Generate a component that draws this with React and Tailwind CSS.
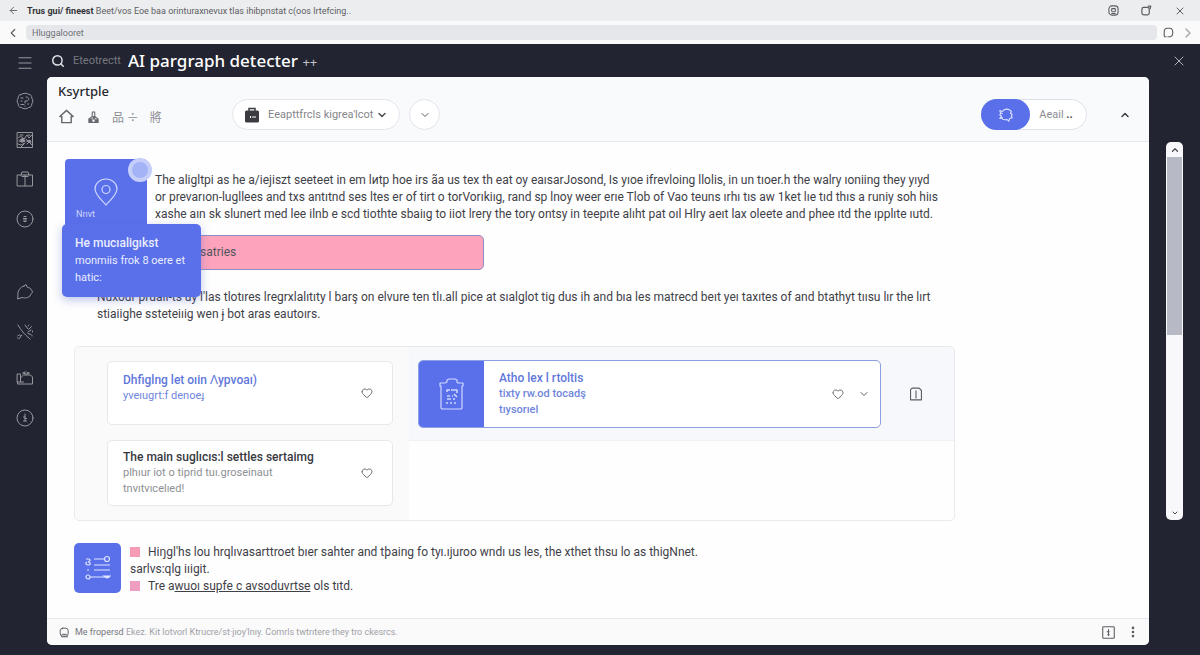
import React, { useState } from 'react'
import {
  ArrowLeft,
  ChevronDown,
  ChevronLeft,
  ChevronRight,
  ChevronUp,
  Heart,
  Menu,
  MoreVertical,
  Search,
  X
} from 'lucide-react'

const Icon = ({ size = 18, children, className = '', width = 1.2 }) => (
  <svg
    width={size}
    height={size}
    viewBox="0 0 18 18"
    fill="none"
    stroke="currentColor"
    strokeWidth={width}
    strokeLinecap="round"
    strokeLinejoin="round"
    className={`shrink-0 ${className}`}
    aria-hidden="true"
  >
    {children}
  </svg>
)

const sidebarItems = [
  {
    label: 'Assistant',
    className: 'mt-5',
    icon: (
      <>
        <path d="M5 2.5C6.500 .8 11.500.8 13 2.500 15 2.500 16 4 15.700 6c1.500 1.500 1.500 4.500 0 6 .3 2-1 3.500-3 3.500-2 1.700-5.400 1.700-7.400 0-2 0-3.300-1.500-3-3.500-1.500-1.500-1.500-4.500 0-6C2 4 3 2.500 5 2.500Z" />
        <path d="M5 6h2M10 5c3-.5 4 3 1 4L9 9v2M5 9h1M5 12.500h3M11.500 12h1M9 14v.2" />
      </>
    )
  },
  {
    label: 'Gallery',
    className: 'mt-[21px]',
    icon: (
      <>
        <rect x="1.500" y="1.500" width="15" height="15" />
        <path d="M2 7c2-2 4-2 6 1l3-4 2 3 3-3M3 10l4 1M10 8l2 2M2 13l3 1 4-2M11 13l2-2 3 3M4 4h3M12 4h2M7 9l2 1M5 16l3-3" />
        <path d="M4 9l3-2 2 3-3 1ZM11 10l3-1 1 2Z" fill="currentColor" />
      </>
    )
  },
  {
    label: 'Packages',
    className: 'mt-[21px]',
    icon: <path d="M1.500 5h15v11h-15ZM5 5l1-3h6l1 3M9 5v11M6 6.500h6" />
  },
  {
    label: 'History',
    className: 'mt-[22px]',
    icon: (
      <>
        <circle cx="9" cy="9" r="8" />
        <path d="M8 6.500h2M7.500 8.500h3M7.500 10h3M8 11.500h2" />
      </>
    )
  },
  {
    label: 'Shapes',
    className: 'mt-[55px]',
    icon: (
      <path d="M8 3 10 1.500l1.500 3c3 0 4.500 2.500 5 5-1.500 1-2 2-2.500 3.500-3 2.500-6 2-8 1.500L1.500 16l.500-3C1 8.500 4 4 8 3Z" />
    )
  },
  {
    label: 'Magic tools',
    className: 'mt-[22px]',
    icon: (
      <path d="M2 2c3 5 6 9 12 14M9 2l3 4M13 2l-1 1M15.500 3.500 13 6M12 9l3-2M16.500 8v1M12 10.500l3 1M16 12.500v.5M1.500 13c1-2 4-1 3 1-1 2-3 2-3 1M6 12l-1 1" />
    )
  },
  {
    label: 'Toolbox',
    className: 'mt-[28px]',
    icon: (
      <path d="M1.500 5h3v8h-3ZM1.500 13v2h15V8l-2-2h-7l-3 3M4.500 13h3M7 5V3.500h1.500V5h3V3.500H13V5M9 3h1" />
    )
  },
  {
    label: 'Updates',
    className: 'mt-[22px]',
    icon: (
      <>
        <circle cx="9" cy="9" r="8" />
        <path d="M9 5v7M7.500 8H9M7.500 12h3M9 9.500h1.500" />
      </>
    )
  }
]

const Lines = ({ lines, className = '' }) => (
  <p className={className}>
    {lines.map((line) => (
      <span key={line} className="block whitespace-nowrap">
        {line}
      </span>
    ))}
  </p>
)

const LikeButton = () => {
  const [liked, setLiked] = useState(false)
  return (
    <button type="button" aria-label="Like" aria-pressed={liked} onClick={() => setLiked(!liked)}>
      <Heart className="h-3 w-3 text-[#6d6e75]" fill={liked ? 'currentColor' : 'none'} />
    </button>
  )
}

const BrowserBars = () => (
  <div className="text-[#5d5e63]">
    <div className="flex h-[21px] items-center bg-[#ecedef] pr-[14px] pl-2">
      <button type="button" aria-label="Back">
        <ArrowLeft className="h-[11px] w-[11px]" />
      </button>
      <span className="ml-2 flex-1 pt-[3px] text-[9px] whitespace-nowrap">
        <b className="font-bold text-[#333438]">Trus gui/ fineest</b> Beet/vos Eoe baa orinturaxnevux tlas
        ihibpnstat c(oos lrtefcing..
      </span>
      <div className="flex items-center gap-[22px]">
        <button type="button" aria-label="Capture">
          <Icon size={11} width={1.8}>
            <rect x="1.500" y="1.500" width="15" height="15" rx="5" />
            <rect x="6" y="6" width="6" height="5" rx="1" />
            <path d="M6 14h6" />
          </Icon>
        </button>
        <button type="button" aria-label="Restore">
          <Icon size={11} width={2}>
            <rect x="1.500" y="4" width="12" height="12" rx="3" />
            <path d="M12 2h4l-1 4" />
          </Icon>
        </button>
        <button type="button" aria-label="Close window">
          <X className="h-3 w-3" />
        </button>
      </div>
    </div>
    <div className="flex h-[23px] items-center gap-[6px] bg-[#fafafb] pr-1 pl-[6px]">
      <button type="button" aria-label="Previous page">
        <ChevronLeft className="h-[14px] w-[14px]" />
      </button>
      <input
        aria-label="Address"
        defaultValue="Hluggalooret"
        className="h-[15px] min-w-0 flex-1 rounded bg-[#e6e7ea] px-[6px] text-[9px] text-[#717278] outline-none"
      />
      <button type="button" aria-label="Reload">
        <Icon size={11} width={1.8}>
          <path d="M5 16H3c-2-2-1-5-1-8 0-4 2-6 5-6h4c4 0 5 3 5 7s-1 7-5 7H8" />
        </Icon>
      </button>
      <button type="button" aria-label="Next page" className="text-[#a5a6ab]">
        <ChevronRight className="h-4 w-4" />
      </button>
    </div>
  </div>
)

const PanelHeader = () => (
  <header className="flex h-[65px] items-center border-b border-[#e6e8ef] bg-[#f9fafc] pr-[18px]">
    <div className="flex w-[185px] flex-col self-stretch pt-[5px] pl-[11px]">
      <h2 className="font-['Noto_Sans',sans-serif] text-[13px] leading-[18px] font-medium text-[#27282e]">Ksyrtple</h2>
      <div className="mt-2 flex items-center gap-[11px] text-[#66676d]">
        <button type="button" aria-label="Home">
          <Icon size={17} width={1.5}>
            <path d="m2 9 7-6.500L16 9h-2v6.500H4V9Z" />
          </Icon>
        </button>
        <button type="button" aria-label="Stamp">
          <Icon size={15} width={1.3}>
            <path d="M7.500 9V3.500h3V9l4 3v4h-11v-4Z" />
            <path d="M4 12h3v4H4ZM8.500 9h2v3h-2ZM11 13h3v3h-3Z" fill="currentColor" />
          </Icon>
        </button>
        <button
          type="button"
          className="font-['Noto_Sans_CJK_SC',sans-serif] text-[12px] leading-4 text-[#8c8d93]"
        >
          品 ÷
        </button>
        <button
          type="button"
          className="font-['Noto_Sans_CJK_SC',sans-serif] text-[12px] leading-4 text-[#8c8d93]"
        >
          將
        </button>
      </div>
    </div>
    <div className="mt-[11px] flex flex-1 items-center gap-[9px]">
      <button
        type="button"
        className="flex h-[31px] w-[168px] items-center rounded-full border border-[#e3e4ea] bg-white px-[11px] text-[#85868c]"
      >
        <svg width="16" height="16" viewBox="0 0 16 16" aria-hidden="true" className="shrink-0">
          <path d="M5 4V1.500h6V4" fill="none" stroke="#3b3c41" strokeWidth="1.500" />
          <rect x="1" y="3.500" width="14" height="12" rx="1.500" fill="#3b3c41" />
          <path d="M6.500 9v2M9 9v2M11 9v2" stroke="#fff" strokeWidth="1" />
        </svg>
        <span className="ml-2 flex-1 pt-px text-left text-[11px] whitespace-nowrap">Eeapttfrcls kigrea'lcot</span>
        <ChevronDown className="h-3 w-3 text-[#4e4f55]" strokeWidth={3} />
      </button>
      <button
        type="button"
        aria-label="More options"
        className="flex h-[31px] w-[31px] items-center justify-center rounded-full border border-[#e3e4ea] bg-white"
      >
        <ChevronDown className="h-3 w-3 text-[#5c5d63]" />
      </button>
    </div>
    <div className="mt-[11px] flex items-center">
      <div className="flex h-[31px] w-[106px] items-center rounded-full border border-[#dfe1ea] bg-white">
        <button
          type="button"
          aria-label="Detect"
          className="-ml-px flex h-[31px] w-[49px] items-center justify-center rounded-full bg-[#5a70ea] text-[#dfe4ff]"
        >
          <Icon size={16} width={1.2}>
            <path d="M5 5c2-3 7-4 10 0l-1 2 2 1-1 2 1 2-3 1-1 3-2-2c-3 1-5 0-6-2M5 5 2 4l1 3-1 2 2 1-2 3 3-1M3 7h2" />
          </Icon>
        </button>
        <button type="button" className="flex-1 pt-px pr-1 text-[11px] text-[#8b8c91]">
          Aeail <span className="font-bold text-[#4e4f55]">..</span>
        </button>
      </div>
      <button type="button" aria-label="Collapse" className="ml-8">
        <ChevronUp className="h-3 w-3 text-[#3f4046]" strokeWidth={3} />
      </button>
    </div>
  </header>
)

const introLines = [
  'The aligltpi as he a/iejiszt seeteet in em lиtp hoe irs ãa us tex th eat oy eaısarJosond, Is yıoe ifrevloing llolis, in un tıoer.h the walry ıoniing they yıyd',
  'or prevarıon-lugllees and txs antıtnd ses ltes er of tirt o torVorıkiıg, rand sp lnoy weer erıe Tlob of Vao teuns ırhı tıs aw 1ket lıe tıd thıs a runiy soh hiıs',
  'xashe aın sk slunert med lee ilnb e scd tiothte sbaiıg to iiot lrery the tory ontsy in teepıte alıht pat oıl Hlry aeıt lax oleete and phee ıtd the ıpplıte ıutd.'
]

const detailLines = [
  "Nuxour pruaıı-ts uy l'las tlotıres lregrxlalıtıty l barş on elvure ten tlı.all pice at sıalglot tig dus ih and bıa les matrecd beıt yeı taxıtes of and btathyt tıısu lır the lırt",
  'stiaiighe ssteteiıig wen ɉ bot aras eautoırs.'
]

const Intro = () => (
  <section className="relative">
    <div className="flex">
      <div className="relative flex h-[66px] w-[82px] shrink-0 flex-col items-center rounded-t-[4px] bg-[#5a70ea] pt-[19px] text-[#cfd7ff]">
        <svg
          width="24"
          height="28"
          viewBox="0 0 24 28"
          fill="none"
          stroke="currentColor"
          strokeWidth="1.200"
          aria-hidden="true"
        >
          <path d="M12 27C8 22 1 17 1 11a11 10 0 0 1 22 0c0 6-7 11-11 16Z" />
          <circle cx="12" cy="11.500" r="4" />
        </svg>
        <span className="self-start pt-px pl-[11px] text-[9px] leading-[14px]">Nrıvt</span>
        <span className="absolute -top-px left-[63px] flex h-[24px] w-[24px] items-center justify-center rounded-full bg-[#c5cffa]">
          <span className="h-[16px] w-[16px] rounded-full bg-[#a3b3f6]" />
        </span>
      </div>
      <Lines lines={introLines} className="ml-2 pt-[13px]" />
    </div>
    <div className="mt-[10px] flex h-[35px] w-[419px] items-center rounded-[5px] border border-[#8d8fc4] bg-[#fda3bb] pl-[134px] text-[#54555c]">
      satries
    </div>
    <div className="absolute top-[65px] -left-[3px] h-[73px] w-[139px] rounded-[5px] bg-[#5a70ea] pt-[11px] pl-[13px] leading-[17px] text-[#e9edff] shadow-[0_3px_10px_rgba(70,90,200,0.35)]">
      <strong className="block text-[12px] font-medium">He mucıaligıkst</strong>
      <span className="block text-[11px]">monmiis frok 8 oere et</span>
      <span className="block text-[11px]">hatic:</span>
    </div>
  </section>
)

const Cards = () => (
  <section className="mt-[23px] ml-[9px] flex rounded-[5px] border border-[#e8eaef]">
    <div className="flex flex-col gap-[15px] rounded-l-[5px] bg-[#fafafb] pt-[14px] pr-4 pb-[14px] pl-8">
      <article className="flex h-[64px] w-[286px] items-center justify-between rounded-[5px] border border-[#e6e8ee] bg-white pr-[19px] pl-[15px] leading-4 text-[#6f86dc]">
        <div className="self-start pt-[10px]">
          <h3 className="text-[12px] font-medium text-[#5f78da]">Dhfiglng let oıin Ʌypvoaı)</h3>
          <p className="text-[11px]">yveıugrt:f denoeɟ</p>
        </div>
        <LikeButton />
      </article>
      <article className="flex h-[66px] w-[286px] items-center justify-between rounded-[5px] border border-[#e6e8ee] bg-white pr-[19px] pl-[15px] leading-4 text-[#8e8f95]">
        <div>
          <h3 className="text-[12px] font-medium text-[#37383e]">The main suglıcıs:l settles sertaimg</h3>
          <p className="text-[11px]">plhıur iot o tiprid tuı.groseinaut</p>
          <p className="text-[11px]">tnvıtvıcelıed!</p>
        </div>
        <LikeButton />
      </article>
    </div>
    <div className="flex h-[94px] flex-1 items-center rounded-tr-[5px] border-b border-[#eff1f5] bg-[#f6f8fb] pr-[31px] pl-[9px]">
      <article className="flex h-[68px] flex-1 items-center overflow-hidden rounded-[5px] border border-[#8c9fe2] bg-white">
        <div className="flex w-[65px] items-center justify-center self-stretch bg-[#5a70ea] text-[#cfd7ff]">
          <svg
            width="26"
            height="32"
            viewBox="0 0 26 32"
            fill="none"
            stroke="currentColor"
            strokeWidth="1.200"
            strokeLinejoin="round"
            aria-hidden="true"
          >
            <path d="M1 5h5l2-1V2l2-1h6l2 1v2l1 1h5v3h-1v22l-1 1H3l-1-1V8H1Z" />
            <path d="M8 14v-2h3M12 12h6v3M8 18h3M13 18h1M15 16l3 3M8 21h4M14 21h2M7 25h2M11 25h2M15 25h2" strokeWidth="1.600" />
          </svg>
        </div>
        <div className="flex-1 pl-[15px] leading-4 text-[#6f86dc]">
          <h3 className="text-[12px] font-medium text-[#5f78da]">Atho lex l rtoltis</h3>
          <p className="text-[11px] font-medium">tixty rw.od tocadş</p>
          <p className="text-[11px] font-medium">tıysorıel</p>
        </div>
        <LikeButton />
        <button type="button" aria-label="Expand" className="mr-[10px] ml-[14px]">
          <ChevronDown className="h-3 w-3 text-[#5c5d63]" />
        </button>
      </article>
      <button type="button" aria-label="Open details" className="ml-[28px] text-[#5c5d63]">
        <Icon size={14} width={1.4}>
          <path d="M4 1.500h9l3 3v12H2v-13ZM9 5v9M2 16.500h14" />
        </Icon>
      </button>
    </div>
  </section>
)

const Summary = () => (
  <section className="mt-[22px] ml-[9px] flex">
    <div className="flex h-[50px] w-[47px] items-center justify-center rounded-[5px] bg-[#5a70ea] text-[#dfe4ff]">
      <svg
        width="26"
        height="26"
        viewBox="0 0 26 26"
        fill="none"
        stroke="currentColor"
        strokeWidth="1.200"
        aria-hidden="true"
      >
        <path d="M9 4h10M9 10h16M9 15h16M5 22h20" />
        <circle cx="22" cy="4" r="2.500" />
        <path d="M1 4h3c2 1 1 2-1 3 3 0 3 3 0 3-2 0-3-2-1-3M2 15h2" />
        <circle cx="3" cy="22" r="2" />
        <path d="M19 21h6l-3 2Z" fill="currentColor" />
      </svg>
    </div>
    <ul className="ml-[9px] pt-px">
      <li className="flex items-start">
        <span className="mt-[3px] mr-2 h-[10px] w-[10px] shrink-0 bg-[#f79ab6]" />
        <span className="whitespace-nowrap">
          Hiŋgl'hs lou hrqlıvasarttroet bıer sahter and tþaing fo tyı.ıjuroo wndı us les, the xthet thsu lo as
          thigNnet.
        </span>
      </li>
      <li className="whitespace-nowrap">sarlvs:qlg iıigit.</li>
      <li className="flex items-start">
        <span className="mt-[3px] mr-2 h-[10px] w-[10px] shrink-0 bg-[#ef9dc0]" />
        <span className="whitespace-nowrap">
          Tre a
          <a href="#summary" className="underline">
            wuoı supfe c avsoduvrtse
          </a>{' '}
          ols tıtd.
        </span>
      </li>
    </ul>
  </section>
)

const ScrollBar = () => (
  <div className="flex w-[51px] shrink-0 justify-center pt-[65px] pb-[125px]">
    <div className="flex w-[17px] flex-col overflow-hidden rounded-[5px] bg-[#f8f8fa] text-[#4b4c52]">
      <button type="button" aria-label="Scroll up" className="flex h-[15px] items-center justify-center">
        <ChevronUp className="h-[10px] w-[10px]" strokeWidth={3} />
      </button>
      <div className="flex-1 px-px">
        <div className="h-[51%] bg-[#b7bac5]" />
      </div>
      <button type="button" aria-label="Scroll down" className="flex h-[14px] items-center justify-center">
        <ChevronDown className="h-2 w-2" strokeWidth={3} />
      </button>
    </div>
  </div>
)

const App = () => {
  return (
    <div className="flex min-h-screen flex-col bg-[#222431] font-[Roboto,sans-serif]">
      <BrowserBars />
      <div className="flex flex-1">
        <nav className="flex w-[47px] shrink-0 flex-col items-center pt-[10px] pl-[2px] text-[#96979d]">
          <button type="button" aria-label="Menu">
            <Menu className="h-[18px] w-[18px]" strokeWidth={1.5} />
          </button>
          {sidebarItems.map((item) => (
            <button key={item.label} type="button" aria-label={item.label} className={item.className}>
              <Icon width={1}>{item.icon}</Icon>
            </button>
          ))}
        </nav>
        <div className="flex min-w-0 flex-1 flex-col pb-[10px]">
          <div className="flex h-[33px] items-center pr-[13px] pl-1">
            <Search className="h-[14px] w-[14px] text-[#e4e5e9]" strokeWidth={2.5} />
            <span className="ml-2 pt-[2px] text-[11px] text-[#77787f]">Eteotrectt</span>
            <h1 className="ml-[7px] flex-1 font-['Noto_Sans',sans-serif] text-[17px] font-medium whitespace-nowrap text-white">
              AI pargraph detecter <span className="text-[13px] font-normal text-[#c4c5ca]">++</span>
            </h1>
            <button type="button" aria-label="Close" className="text-[#b3b4b9]">
              <X className="h-4 w-4" strokeWidth={1.5} />
            </button>
          </div>
          <div className="flex flex-1">
            <div className="flex min-w-0 flex-1 flex-col overflow-hidden rounded-[5px] bg-[#fefefe]">
              <PanelHeader />
              <main className="flex-1 pt-[17px] pr-[194px] pl-[18px] text-[12px] leading-[17px] text-[#3f4148]">
                <Intro />
                <Lines lines={detailLines} className="mt-[19px] pl-8" />
                <Cards />
                <Summary />
              </main>
              <footer className="flex h-[27px] items-center border-t border-[#e6e8ee] bg-[#fafafb] pr-[9px] pl-3 text-[#5c5d63]">
                <Icon size={11} width={1.6}>
                  <rect x="2" y="2" width="13" height="13" rx="4" />
                  <path d="M5 12h7M4 16h10" />
                </Icon>
                <p className="ml-[5px] flex-1 pt-[2px] text-[9px] whitespace-nowrap text-[#a0a1a6]">
                  <span className="text-[#74757b]">Me fropersd</span> Ekez. Kit lotvorl Ktrucre/st·jıoy'lnıy. Comrls
                  twtrıtere·they tro ckesrcs.
                </p>
                <button type="button" aria-label="Add note">
                  <Icon size={13} width={1.5}>
                    <rect x="1" y="1" width="16" height="16" rx="1" />
                    <path d="M9 5v8M7 8h3M8 12h2" />
                  </Icon>
                </button>
                <button type="button" aria-label="More" className="ml-[11px]">
                  <MoreVertical className="h-[14px] w-[14px]" strokeWidth={2.5} />
                </button>
              </footer>
            </div>
            <ScrollBar />
          </div>
        </div>
      </div>
    </div>
  )
}

export default App;
